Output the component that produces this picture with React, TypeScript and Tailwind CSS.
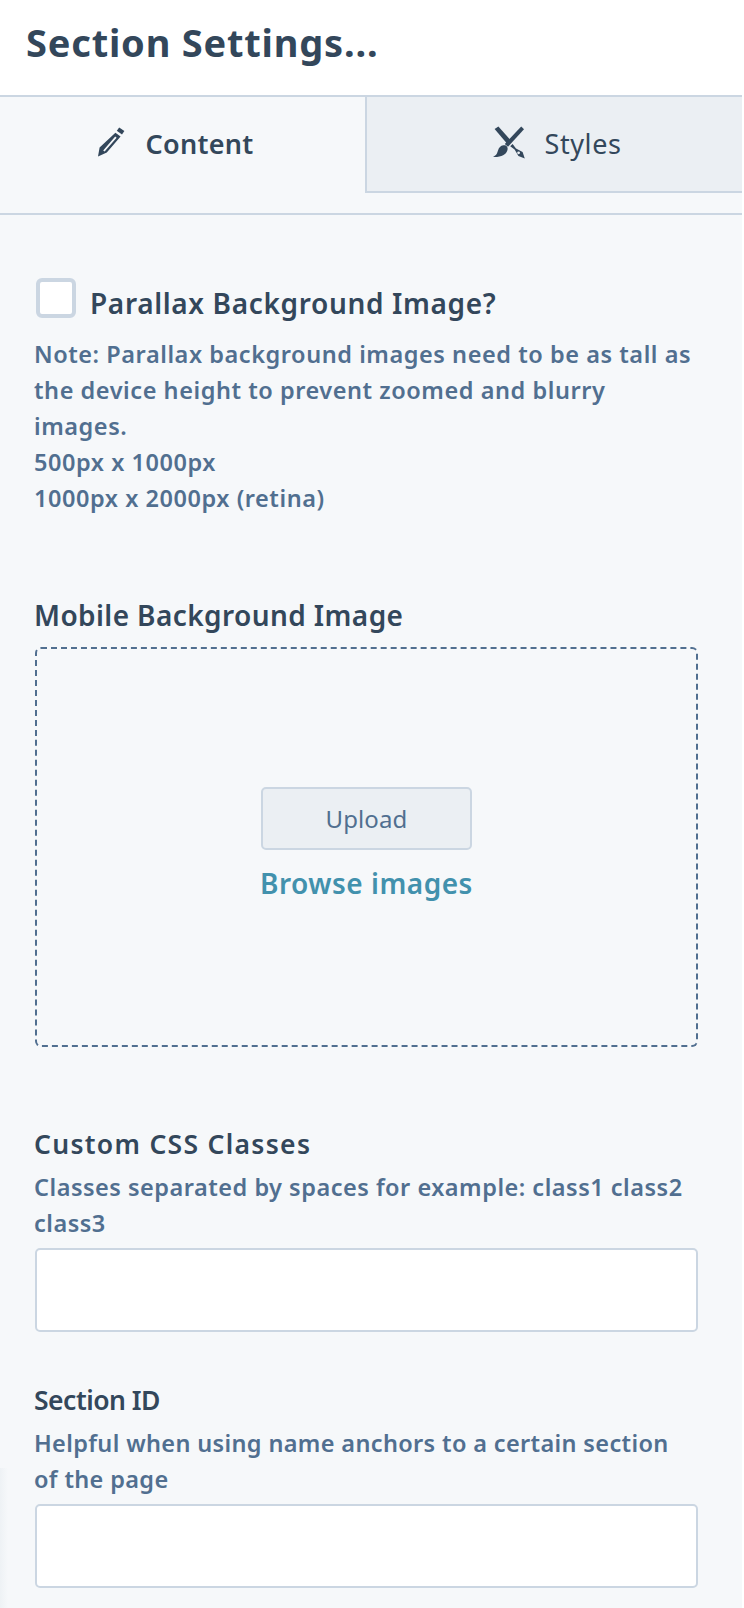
import React from 'react'

const font = { fontFamily: '"Noto Sans", Lato, sans-serif' }

function PencilIcon() {
  return (
    <svg width="30" height="30" viewBox="0 0 30 30" className="mb-[5px] text-[#33475b]" fill="currentColor">
      <path d="M22.2 0.4 L27.4 4 L25 7.4 L19.8 3.8 Z" />
      <path fillRule="evenodd" d="M18.4 5.8 L23.6 9.4 L9.8 25.6 L1 29.6 L2.6 20.6 Z M18.2 9.6 L6.2 23.4 L7.6 24.6 L19.6 10.8 Z" />
    </svg>
  )
}

function BrushIcon() {
  return (
    <svg width="34" height="34" viewBox="0 0 34 34" className="mb-[2px] text-[#33475b]" fill="currentColor">
      <path d="M2.6 3 L6.4 0.4 L19.4 15.2 L15.8 18.4 Z" />
      <path d="M29.2 0.6 L32 3.2 L16 20.8 L12.8 18 Z" />
      <path d="M11.4 19.2 C14.4 18.8 16.4 21 15.4 24.2 C14 28.8 9 31.4 1 31 C4.6 28.8 5 27.6 6 24.4 C6.8 21.6 8.6 19.6 11.4 19.2 Z" />
      <path fillRule="evenodd" d="M20.6 18 L24 22.4 L30.6 26 L32.8 32.4 L26.4 30 L22.6 23.6 L18.2 20.2 Z M26.6 25.4 A1.4 1.4 0 1 0 26.6 28.2 A1.4 1.4 0 1 0 26.6 25.4 Z" />
    </svg>
  )
}

function Field({ label, help, labelClass, helpClass }: { label: string; help: string[]; labelClass: string; helpClass: string }) {
  return (
    <div>
      <div className={`text-[26.5px] leading-[36px] font-semibold text-[#33475b] ${labelClass}`}>{label}</div>
      <div className={`mt-[7px] whitespace-nowrap text-[23.5px] leading-[36px] font-semibold text-[#516f90] ${helpClass}`}>
        {help.map((line) => (
          <div key={line}>{line}</div>
        ))}
      </div>
      <div className="ml-px mt-[7px] h-[84px] rounded-[5px] border-2 border-[#cbd6e2] bg-white" />
    </div>
  )
}

export default function App() {
  return (
    <div style={font} className="relative h-[1608px] w-[744px] overflow-hidden bg-white">
      <div className="h-[95px] pl-[26px] pt-[15px]">
        <h1 className="text-[38px] leading-[54px] font-bold tracking-[0.8px] text-[#33475b]">Section Settings...</h1>
      </div>

      <div className="mr-[2px] h-[1513px] border-t-2 border-[#cbd6e2] bg-[#f6f8fa]">
        <div className="h-[118px] border-b-2 border-[#cbd6e2]">
          <div className="flex h-[96px]">
            <div className="flex w-[365px] items-center justify-center gap-[18px] pr-[14px] pb-[2px]">
              <PencilIcon />
              <span className="text-[27px] font-semibold tracking-[0.3px] text-[#33475b]">Content</span>
            </div>
            <div className="flex flex-1 items-center justify-center gap-[18px] border-b-2 border-l-2 border-[#cbd6e2] bg-[#ebeff3] pl-[5px]">
              <BrushIcon />
              <span className="text-[27px] tracking-[0.6px] text-[#33475b]">Styles</span>
            </div>
          </div>
        </div>

        <div className="pl-[34px] pr-[44px]">
          <div className="mt-[63px] flex items-start gap-[14px] pl-[2px]">
            <div className="h-[40px] w-[40px] rounded-[6px] border-4 border-[#cbd6e2] bg-white" />
            <span className="mt-[5px] text-[28px] leading-[40px] font-semibold tracking-[0.65px] text-[#33475b]">Parallax Background Image?</span>
          </div>

          <div className="mt-[13px] whitespace-nowrap text-[23.5px] leading-[36px] font-semibold tracking-[0.55px] text-[#516f90]">
            <div>Note: Parallax background images need to be as tall as</div>
            <div>the device height to prevent zoomed and blurry</div>
            <div>images.</div>
            <div>500px x 1000px</div>
            <div>1000px x 2000px (retina)</div>
          </div>

          <div className="mt-[79px] text-[28px] leading-[40px] font-semibold tracking-[0.4px] text-[#33475b]">Mobile Background Image</div>

          <div className="ml-px mt-[12px] flex h-[400px] flex-col items-center justify-center rounded-[6px] border-2 border-dashed border-[#516f90] pb-[4px]">
            <div className="flex h-[63px] w-[211px] items-center justify-center rounded-[5px] border-2 border-[#cbd6e2] bg-[#ebeff3] text-[24px] tracking-[0.1px] text-[#516f90]">
              Upload
            </div>
            <div className="mt-[13px] text-[28px] leading-[40px] font-semibold tracking-[0.5px] text-[#4291ad]">Browse images</div>
          </div>

          <div className="mt-[79px]">
            <Field label="Custom CSS Classes" labelClass="tracking-[1.3px]" helpClass="tracking-[0.5px]" help={['Classes separated by spaces for example: class1 class2', 'class3']} />
          </div>
          <div className="mt-[50px]">
            <Field label="Section ID" labelClass="tracking-[-0.5px]" helpClass="tracking-[0.35px]" help={['Helpful when using name anchors to a certain section', 'of the page']} />
          </div>
        </div>
      </div>

      <div className="absolute bottom-0 left-0 h-[140px] w-[8px] bg-gradient-to-r from-[#eef2f5] to-transparent" />
    </div>
  )
}
